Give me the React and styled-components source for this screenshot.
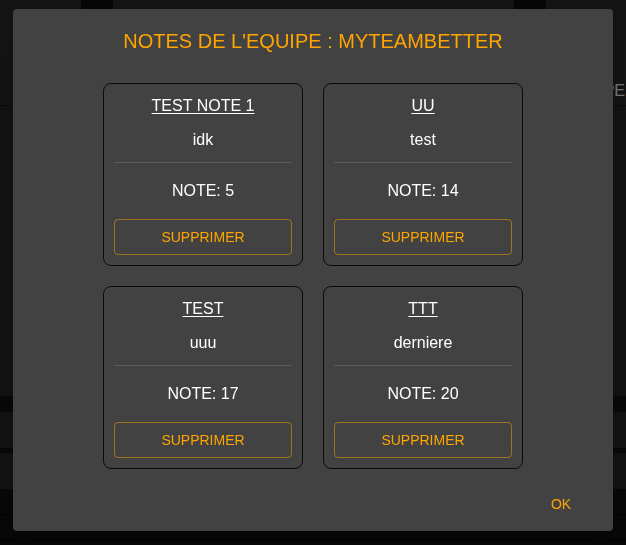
import React from "react";
import styled, { createGlobalStyle } from "styled-components";

const notes = [
  { id: 1, title: "TEST NOTE 1", text: "idk", note: 5 },
  { id: 2, title: "UU", text: "test", note: 14 },
  { id: 3, title: "TEST", text: "uuu", note: 17 },
  { id: 4, title: "TTT", text: "derniere", note: 20 },
];

function App() {
  return (
    <>
      <GlobalStyle />
      <Page>
        <Header>
          <Tabs>
            <Tab />
            <Tab />
          </Tabs>
          <NavRow>
            <NavLink>EQUIPE</NavLink>
          </NavRow>
        </Header>
        <Body />
        <Table>
          <TableRow />
          <TableRow />
          <TableFoot />
          <TableFoot />
        </Table>
      </Page>
      <Backdrop>
        <Dialog role="dialog">
          <DialogTitle>NOTES DE L'EQUIPE : MYTEAMBETTER</DialogTitle>
          <NotesGrid>
            {notes.map((n) => (
              <NoteCard key={n.id}>
                <NoteTitle>{n.title}</NoteTitle>
                <NoteText>{n.text}</NoteText>
                <Divider />
                <NoteValue>NOTE: {n.note}</NoteValue>
                <OutlinedButton>SUPPRIMER</OutlinedButton>
              </NoteCard>
            ))}
          </NotesGrid>
          <Actions>
            <TextButton>OK</TextButton>
          </Actions>
        </Dialog>
      </Backdrop>
    </>
  );
}

export default App;

const GlobalStyle = createGlobalStyle`
  html, body {
    margin: 0;
    padding: 0;
    height: 100%;
    overflow: hidden;
    background: #101010;
    font-family: "Liberation Sans", Arial, sans-serif;
  }
  #root {
    height: 100%;
  }
`;

const Page = styled.div`
  display: flex;
  flex-direction: column;
  height: 545px;
  background: #262626;
`;

const Header = styled.header`
  display: flex;
  flex-direction: column;
  height: 105px;
  background: #282828;
  border-bottom: 1px solid #161616;
`;

const Tabs = styled.div`
  display: flex;
  justify-content: space-between;
  padding: 0 80px 0 81px;
`;

const Tab = styled.div`
  width: 32px;
  height: 9px;
  background: #0e0e0e;
`;

const NavRow = styled.nav`
  display: flex;
  justify-content: flex-end;
  padding: 73px 1px 0 0;
`;

const NavLink = styled.span`
  font-size: 16px;
  color: #eef2f6;
  white-space: nowrap;
`;

const Body = styled.div`
  height: 290px;
`;

const Table = styled.div`
  display: flex;
  flex-direction: column;
  flex: 1;
  background: #101010;
`;

const TableRow = styled.div`
  height: 36px;
  background: #262626;
  margin-top: 16px;
  &:nth-child(2) {
    margin-top: 5px;
  }
`;

const TableFoot = styled.div`
  height: 25px;
  border-bottom: 1px solid #050505;
`;

const Backdrop = styled.div`
  position: fixed;
  inset: 0;
  display: flex;
  justify-content: center;
  align-items: flex-start;
  padding-top: 9px;
  background: rgba(0, 0, 0, 0.5);
`;

const Dialog = styled.div`
  display: flex;
  flex-direction: column;
  align-items: center;
  width: 600px;
  box-sizing: border-box;
  padding: 16px 0 9px;
  background: #424242;
  border-radius: 4px;
  box-shadow: 0 11px 15px -7px rgba(0, 0, 0, 0.2),
    0 24px 38px 3px rgba(0, 0, 0, 0.14);
`;

const DialogTitle = styled.h2`
  margin: 0;
  font-size: 20px;
  font-weight: 400;
  line-height: 32px;
  color: #ffa500;
`;

const NotesGrid = styled.div`
  display: grid;
  grid-template-columns: repeat(2, 200px);
  gap: 20px;
  margin-top: 26px;
`;

const NoteCard = styled.div`
  display: flex;
  flex-direction: column;
  align-items: center;
  box-sizing: border-box;
  height: 183px;
  padding: 10px;
  border: 1px solid #0a0a0a;
  border-radius: 8px;
  color: #ffffff;
`;

const NoteTitle = styled.div`
  font-size: 16px;
  line-height: 24px;
  text-decoration: underline;
  text-underline-offset: 2px;
`;

const NoteText = styled.div`
  margin-top: 10px;
  font-size: 16px;
  line-height: 24px;
`;

const Divider = styled.hr`
  align-self: stretch;
  margin: 10px 0 0;
  border: none;
  border-top: 1px solid #5c5c5c;
`;

const NoteValue = styled.div`
  margin-top: 16px;
  font-size: 16px;
  line-height: 24px;
`;

const OutlinedButton = styled.button`
  align-self: stretch;
  margin-top: 16px;
  height: 36px;
  padding: 0;
  background: transparent;
  border: 1px solid rgba(255, 165, 0, 0.5);
  border-radius: 4px;
  color: #ffa500;
  font-family: "Liberation Sans", Arial, sans-serif;
  font-size: 14px;
  cursor: pointer;
`;

const Actions = styled.div`
  display: flex;
  justify-content: flex-end;
  align-self: stretch;
  padding: 17px 20px 0 0;
`;

const TextButton = styled.button`
  height: 36px;
  min-width: 64px;
  padding: 0 8px;
  background: transparent;
  border: none;
  border-radius: 4px;
  color: #ffa500;
  font-family: "Liberation Sans", Arial, sans-serif;
  font-size: 14px;
  cursor: pointer;
`;
